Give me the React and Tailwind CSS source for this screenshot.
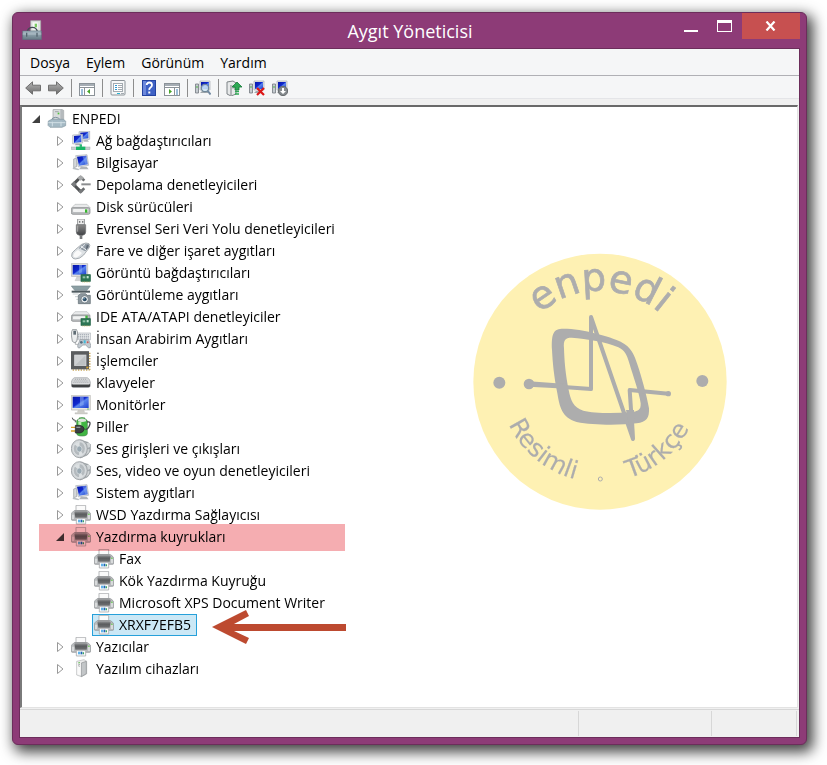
import React from "react";

function Gradients() {
  return (
    <svg width="0" height="0" className="absolute" aria-hidden="true">
      <defs>
        <linearGradient id="screen" x1="0" y1="0" x2="1" y2="1">
          <stop offset="0" stopColor="#0716a8" />
          <stop offset="0.45" stopColor="#1029cf" />
          <stop offset="0.55" stopColor="#5a86ee" />
          <stop offset="1" stopColor="#1c3fd0" />
        </linearGradient>
        <linearGradient id="metal" x1="0" y1="0" x2="0" y2="1">
          <stop offset="0" stopColor="#f2f4f5" />
          <stop offset="1" stopColor="#a5abb0" />
        </linearGradient>
        <linearGradient id="dark" x1="0" y1="0" x2="0" y2="1">
          <stop offset="0" stopColor="#8a8a8a" />
          <stop offset="1" stopColor="#3f4144" />
        </linearGradient>
        <linearGradient id="slot" x1="0" y1="0" x2="0" y2="1">
          <stop offset="0" stopColor="#8c8e90" />
          <stop offset="0.4" stopColor="#5a5c5e" />
          <stop offset="1" stopColor="#6e7072" />
        </linearGradient>
        <linearGradient id="arrow" x1="0" y1="0" x2="0" y2="1">
          <stop offset="0" stopColor="#b5b5b5" />
          <stop offset="1" stopColor="#6c6c6c" />
        </linearGradient>
        <linearGradient id="box" x1="0" y1="0" x2="0" y2="1">
          <stop offset="0" stopColor="#a9bcc6" />
          <stop offset="1" stopColor="#647883" />
        </linearGradient>
      </defs>
    </svg>
  );
}

function Board() {
  return (
    <g>
      <rect x="30" y="35" width="28" height="20" fill="#2c7554" stroke="#1f5f43" strokeWidth="2" />
      <rect x="35" y="40" width="8" height="6" fill="#8fc0a6" />
      <rect x="47" y="39" width="6" height="7" fill="#bfe4cf" />
      <path d="M34 57h22" stroke="#c9b257" strokeWidth="2" strokeDasharray="3 2" />
    </g>
  );
}

function Drive({ lamp }) {
  return (
    <g>
      <path d="M12 22h36l10 11H2z" fill="#e9eaeb" stroke="#b9bcbe" strokeWidth="2" />
      <rect x="1" y="32" width="56" height="20" rx="5" fill="#b9bcbe" stroke="#7d8082" strokeWidth="2" />
      <rect x="6" y="36" width="46" height="9" rx="2" fill="#f1f2f2" />
      {lamp && <rect x="42" y="37" width="7" height="10" fill="#35b52c" />}
    </g>
  );
}

function Printer() {
  return (
    <g>
      <path d="M15 1h29v20H15z" fill="#fafafa" stroke="#a9acae" strokeWidth="2.5" />
      <path d="M9 17h41l7 6q2 2 2 5v15q0 3-3 3H4q-3 0-3-3V28q0-3 2-5z" fill="#b9bcbe" stroke="#8a8d8f" strokeWidth="2" />
      <path d="M12 15h35v8H12z" fill="#9a9c9e" />
      <path d="M10 20h40l-3 18H13z" fill="url(#slot)" />
      <path d="M3 29h6v13H3zM51 29h6v13h-6z" fill="#d9dbdc" />
      <rect x="51" y="26" width="5" height="4" fill="#7cd06b" />
      <path d="M16 40h28v17H16z" fill="#fafafa" stroke="#a9acae" strokeWidth="2.5" />
      <path d="M21 44h7v8h-7z" fill="#5fb2ea" />
      <path d="M29 44h5v8h-5z" fill="#1d62b8" />
      <path d="M35 46h4v6h-4z" fill="#3aa164" />
    </g>
  );
}

function Speaker() {
  return (
    <g>
      <path d="M28 3l22 7 8 6v20l-9 12-22 9z" fill="#a4aaae" stroke="#8c9296" strokeWidth="2" />
      <path d="M46 12h11v12l-9 4zM47 30l9 1-3 10-8 6z" fill="#d0d4d6" />
      <ellipse cx="25" cy="29" rx="24" ry="27" fill="#d0d4d7" stroke="#969b9f" strokeWidth="2.5" />
      <ellipse cx="25" cy="29" rx="18" ry="21" fill="#b4babe" stroke="#e6e9ea" strokeWidth="2" />
      <path d="M25 29L11 16Q17 8 26 8zM25 29l11 16q-5 6-12 6z" fill="#dde1e3" />
      <ellipse cx="25" cy="30" rx="8" ry="9" fill="#9aa9b2" stroke="#dfe4e7" strokeWidth="2" />
    </g>
  );
}

function Computer() {
  return (
    <g>
      <path d="M8 18l9-3v26l-9 3z" fill="#d5d8db" stroke="#959a9e" strokeWidth="2" />
      <path d="M14 8l34-3 5 32-31 5z" fill="#dfe2e5" stroke="#aab0b5" strokeWidth="2" />
      <path d="M18 11l28-3 4 26-26 4z" fill="url(#screen)" />
      <path d="M34 10l12-2 4 26-6 1z" fill="#90b4f2" opacity=".45" />
      <path d="M30 41h17l6 8H24z" fill="#b0b5b9" />
      <path d="M6 43l19 5-3 4-17-4z" fill="#b8bec3" />
    </g>
  );
}

const drawings = {
  root: (
    <g>
      <path d="M18 2l22-2 10 4v33H18z" fill="#d9dcdd" stroke="#999d9f" strokeWidth="2" />
      <path d="M40 0l10 4v32H40z" fill="#b5babd" />
      <path d="M24 8h11" stroke="#8b8f91" strokeWidth="2" />
      <rect x="32" y="11" width="5" height="5" fill="#4fc03d" />
      <path d="M13 34q2-9 13-9t14 9" fill="none" stroke="#7d929d" strokeWidth="3" />
      <path d="M4 36l10-5h36l6 6v13l-11 5H9l-6-6z" fill="#a4b9c4" stroke="#869aa5" strokeWidth="2" />
      <path d="M4 41h51M16 38v14M42 38v14" stroke="#d1dfe5" strokeWidth="3" />
    </g>
  ),
  network: (
    <g>
      <path d="M24 2l32-2v25l-32 4z" fill="#dce0e6" stroke="#aab0b8" strokeWidth="2" />
      <path d="M28 5l24-2v19l-24 3z" fill="url(#screen)" />
      <path d="M38 27h12l4 5H38z" fill="#b3b8bd" />
      <path d="M5 12l30-2v26l-30 3z" fill="#e3e6ea" stroke="#aab0b8" strokeWidth="2" />
      <path d="M9 15l22-2v20l-22 3z" fill="url(#screen)" />
      <path d="M15 38h12l3 5H11z" fill="#a6acb2" />
      <rect x="26" y="40" width="7" height="8" fill="#2fb976" />
      <rect x="1" y="48" width="56" height="8" fill="#c9cfd1" stroke="#a3abad" strokeWidth="1.5" />
      <rect x="15" y="47" width="28" height="10" fill="#18b765" />
    </g>
  ),
  computer: <Computer />,
  storage: (
    <g>
      <path d="M29 6L7 28l22 22" fill="none" stroke="#505254" strokeWidth="9" />
      <path d="M29 6l11 11M29 50l11-10" stroke="#6b6d6f" strokeWidth="8" />
      <path d="M29 0l10 9-10 8-10-8z" fill="#a8aaab" />
      <path d="M29 42l8 7-8 7-8-7z" fill="#77797b" />
      <path d="M9 19l8 9-8 9-9-9z" fill="#7b7d7f" />
      <path d="M31 28h28" stroke="#8c8e90" strokeWidth="6" />
    </g>
  ),
  drive: <Drive lamp />,
  usb: (
    <g>
      <rect x="20" y="0" width="20" height="18" fill="#ececec" stroke="#85888a" strokeWidth="2.5" />
      <path d="M24 6h4v5h-4zM33 6h4v5h-4z" fill="#77797b" />
      <path d="M16 17h28v22q0 8-9 10H25q-9-2-9-10z" fill="url(#dark)" stroke="#6d6e70" strokeWidth="2" />
      <path d="M26 48h8v12h-8z" fill="#77797b" />
      <path d="M20 20v18" stroke="#aaa" strokeWidth="3" />
    </g>
  ),
  mouse: (
    <g>
      <path d="M2 46Q-1 36 14 25L32 10q14-7 22-2 5 5 0 13L38 42Q27 54 13 54 5 54 2 46z" fill="#dde1e4" stroke="#9aa0a5" strokeWidth="2.5" />
      <path d="M7 44q2-10 14-17l12 9Q20 51 12 49q-5-1-5-5z" fill="#fafafa" />
      <path d="M33 11q12-5 21 0 1 5-2 9l-9 11-20-9z" fill="#919ba5" />
      <path d="M30 16l16 11M42 10L28 23" stroke="#edf0f3" strokeWidth="3" />
      <path d="M46 14l7-4-1 9-7 9z" fill="#5d6873" />
    </g>
  ),
  display: (
    <g>
      <path d="M1 2h49v38H1z" fill="#e4e4e2" stroke="#adaeac" strokeWidth="2" />
      <path d="M5 6h41v29H5z" fill="url(#screen)" />
      <path d="M24 6h9v22l-9 4z" fill="#8eb0f4" opacity=".5" />
      <path d="M18 41h14l4 12H12z" fill="#d3d5d6" stroke="#adaeac" />
      <Board />
    </g>
  ),
  imaging: (
    <g>
      <path d="M1 3h57L48 16H11z" fill="#8c9fa4" stroke="#7a8c92" strokeWidth="2" />
      <path d="M2 17h55v6H2z" fill="#4f5a5f" />
      <path d="M5 27h18M12 35h10M16 43h6" stroke="#c7cdd0" strokeWidth="3" />
      <path d="M22 31l7-5h15l5 5h9v25H22z" fill="#8d979e" stroke="#5d6970" strokeWidth="2" />
      <circle cx="41" cy="43" r="11" fill="#eef1f3" stroke="#5d6970" strokeWidth="2" />
      <circle cx="41" cy="43" r="6" fill="#2c4b63" />
      <circle cx="39" cy="41" r="2" fill="#9ec9e5" />
    </g>
  ),
  ide: (
    <g>
      <path d="M12 14h36l10 11H2z" fill="#e9eaeb" stroke="#b9bcbe" strokeWidth="2" />
      <rect x="1" y="24" width="56" height="19" rx="5" fill="#b9bcbe" stroke="#7d8082" strokeWidth="2" />
      <rect x="6" y="28" width="40" height="9" rx="2" fill="#f1f2f2" />
      <path d="M43 26h7v9h-7z" fill="#41b53b" />
      <Board />
    </g>
  ),
  human: (
    <g>
      <path d="M16 12h43v20H16z" fill="#e9ebed" stroke="#aeb3b9" strokeWidth="2" />
      <path d="M20 17h36M20 22h36M20 27h36" stroke="#a2a9b2" strokeWidth="3" strokeDasharray="4 2" />
      <path d="M5 1h11q5 6 4 20l-3 17q-8 6-13-1L1 18Q1 6 5 1z" fill="#eceeef" stroke="#8b9094" strokeWidth="2.5" />
      <path d="M7 5h8v12H7z" fill="#5f6c74" />
      <path d="M13 39v7h10" fill="none" stroke="#8b9094" strokeWidth="2" />
      <path d="M27 32h26l7 18q-1 10-8 6l-8-8h-9l-8 8q-7 4-7-6z" fill="#c3cad0" stroke="#8c949b" strokeWidth="2" />
      <circle cx="31" cy="40" r="4" fill="#596e7f" />
      <path d="M38 34h6v9h-6z" fill="#42b9da" />
      <circle cx="50" cy="40" r="3" fill="#ca5b59" />
    </g>
  ),
  cpu: (
    <g>
      <path d="M56 5v52M5 57h51" stroke="#c9a85c" strokeWidth="5" strokeDasharray="4 4" />
      <rect x="0" y="0" width="54" height="55" fill="#5a5c5e" />
      <path d="M0 0h54v2H0z" fill="#7d7f81" />
      <rect x="11" y="12" width="34" height="32" fill="#bec1c3" stroke="#dddfe0" strokeWidth="2" />
      <path d="M11 44V12h34z" fill="#d9dbdc" opacity=".6" />
      <path d="M46 47h6v5h-6z" fill="#e0a528" />
    </g>
  ),
  keyboard: (
    <g>
      <path d="M10 14h39q7 3 9 13v11q0 5-6 5H7q-6 0-6-5V27q2-10 9-13z" fill="#d3d5d7" stroke="#a2a5a7" strokeWidth="2" />
      <path d="M12 19h36M10 24h40M7 29h46" stroke="#96999c" strokeWidth="2" strokeDasharray="3 3" />
      <path d="M2 34h55v4q0 5-5 5H7q-5 0-5-5z" fill="#3f4143" />
      <path d="M5 33h49" stroke="#f2f3f4" strokeWidth="2" />
    </g>
  ),
  monitor: (
    <g>
      <path d="M1 1h57v44H1z" fill="#e9e8e3" stroke="#b4b3af" strokeWidth="2" />
      <path d="M5 5h48v34H5z" fill="url(#screen)" />
      <path d="M27 5h11v25l-11 4z" fill="#8eb0f4" opacity=".55" />
      <path d="M21 46h18l2 7h8v4H12v-4h7z" fill="#cfcec9" stroke="#b4b3af" />
      <path d="M48 42h6" stroke="#3db53b" strokeWidth="2" />
    </g>
  ),
  battery: (
    <g>
      <path d="M24 3q9-3 18 0v4q7 1 7 5v38q-1 7-16 7t-16-7V12q0-4 7-5z" fill="#41b644" stroke="#4c8852" strokeWidth="2" />
      <path d="M21 8q12-7 24 0v5q-12 4-24 0z" fill="#dfe5df" />
      <path d="M22 15h9v14h-9z" fill="#baf3af" />
      <path d="M48 15q12-3 8 9T43 38" fill="none" stroke="#45484c" strokeWidth="4" />
      <path d="M4 2l2 6 7 2v6" fill="none" stroke="#484c4e" strokeWidth="3" />
      <path d="M0 31h14M0 42h14" stroke="#d7a32c" strokeWidth="4" />
      <path d="M13 25h14q11 2 13 11-2 10-13 12H13z" fill="#3b3f42" stroke="#202325" strokeWidth="2" />
      <path d="M16 31h12" stroke="#90979b" strokeWidth="4" />
    </g>
  ),
  speaker: <Speaker />,
  printer: <Printer />,
  software: (
    <g>
      <path d="M17 7l22-5 8 5v38l-16 8-14-5z" fill="#ececec" stroke="#b5b8ba" strokeWidth="2" />
      <path d="M31 12l15-5v37l-15 9z" fill="#c3c6c8" stroke="#8b8e90" strokeWidth="2" />
      <path d="M19 10l10 3v36l-10-3z" fill="#fafafa" />
      <path d="M21 15l6 2M21 20l6 2" stroke="#85898c" strokeWidth="2" />
      <path d="M22 10h5v3h-5z" fill="#58b948" />
    </g>
  ),
};

function Icon({ name, className = "size-5" }) {
  return (
    <svg viewBox="0 0 60 60" className={className + " shrink-0"} aria-hidden="true">
      {drawings[name]}
    </svg>
  );
}

function Expander({ open, label }) {
  return (
    <button type="button" aria-label={label} aria-expanded={open} className="flex h-5 w-3 shrink-0 items-center justify-center">
      {open ? (
        <svg viewBox="0 0 10 10" className="size-2.5" aria-hidden="true">
          <path d="M9 1v8H1z" fill="#404040" />
        </svg>
      ) : (
        <svg viewBox="0 0 8 12" className="h-3 w-2" aria-hidden="true">
          <path d="M1.500 1.500v9L7 6z" fill="#fff" stroke="#999" strokeWidth="1" />
        </svg>
      )}
    </button>
  );
}

const categories = [
  ["Ağ bağdaştırıcıları", "network"],
  ["Bilgisayar", "computer"],
  ["Depolama denetleyicileri", "storage"],
  ["Disk sürücüleri", "drive"],
  ["Evrensel Seri Veri Yolu denetleyicileri", "usb"],
  ["Fare ve diğer işaret aygıtları", "mouse"],
  ["Görüntü bağdaştırıcıları", "display"],
  ["Görüntüleme aygıtları", "imaging"],
  ["IDE ATA/ATAPI denetleyiciler", "ide"],
  ["İnsan Arabirim Aygıtları", "human"],
  ["İşlemciler", "cpu"],
  ["Klavyeler", "keyboard"],
  ["Monitörler", "monitor"],
  ["Piller", "battery"],
  ["Ses girişleri ve çıkışları", "speaker"],
  ["Ses, video ve oyun denetleyicileri", "speaker"],
  ["Sistem aygıtları", "computer"],
  ["WSD Yazdırma Sağlayıcısı", "printer"],
  ["Yazdırma kuyrukları", "printer", ["Fax", "Kök Yazdırma Kuyruğu", "Microsoft XPS Document Writer", "XRXF7EFB5"]],
  ["Yazıcılar", "printer"],
  ["Yazılım cihazları", "software"],
];

function RedArrow() {
  return (
    <svg viewBox="0 0 134 36" className="absolute top-1/2 left-full ml-4 h-9 w-[134px] -translate-y-4" aria-hidden="true">
      <path d="M0 18L34 1l3 6-15 8h112v7H22l15 7-3 6z" fill="#bd4a30" />
    </svg>
  );
}

function Category({ label, icon, items }) {
  return (
    <li role="treeitem" aria-expanded={Boolean(items)} aria-selected="false">
      <div className="relative flex h-[22px] items-center pl-8">
        <Expander open={Boolean(items)} label={label} />
        <Icon name={icon} className="ml-[5px] size-5" />
        <span className="ml-[5px]">{label}</span>
        {items && <div className="absolute -top-0.5 left-[17px] h-[27px] w-[306px] bg-[#f5adb1] mix-blend-multiply" />}
      </div>
      {items && (
        <ul role="group" className="pl-[70px]">
          {items.map((item) => {
            const selected = item === "XRXF7EFB5";
            return (
              <li key={item} role="treeitem" aria-selected={selected} className="flex">
                <div
                  className={
                    selected
                      ? "relative flex h-[22px] items-center border border-[#26a0da] bg-[#cbe8f6] pr-[5px] pl-px"
                      : "flex h-[22px] items-center pl-0.5"
                  }
                >
                  <Icon name="printer" />
                  <span className="ml-[5px]">{item}</span>
                  {selected && <RedArrow />}
                </div>
              </li>
            );
          })}
        </ul>
      )}
    </li>
  );
}

function Watermark() {
  return (
    <svg viewBox="0 0 840 840" className="pointer-events-none absolute top-[133px] right-[57px] size-[280px]" role="img" aria-label="enpedi Resimli Türkçe">
      <defs>
        <path id="upper" d="M147 425a273 273 0 0 1 546 0" />
        <path id="lower" d="M118 425a302 302 0 0 0 604 0" />
      </defs>
      <ellipse cx="420" cy="425" rx="380" ry="384" fill="#fef1b3" />
      <g fill="#adadad" stroke="#adadad" fontFamily="'DejaVu Sans', sans-serif">
        <text fontSize="116" strokeWidth="2" textAnchor="middle">
          <textPath href="#upper" startOffset="50%">enpedi</textPath>
        </text>
        <text fontSize="74" strokeWidth="0.500" textAnchor="middle">
          <textPath href="#lower" startOffset="28%">Resimli</textPath>
        </text>
        <text fontSize="74" strokeWidth="0.500" textAnchor="middle">
          <textPath href="#lower" startOffset="72%">Türkçe</textPath>
        </text>
      </g>
      <circle cx="421" cy="717" r="6" fill="none" stroke="#adadad" strokeWidth="3" />
      <g fill="#adadad">
        <circle cx="118" cy="428" r="18" />
        <circle cx="727" cy="423" r="18" />
        <circle cx="207" cy="432" r="16" />
        <circle cx="625" cy="461" r="8" />
        <path
          fillRule="evenodd"
          d="M276 330C274 280 280 266 310 266C370 266 450 290 482 305C515 322 523 345 532 373C545 412 560 466 567 505C568 535 560 546 530 550C480 556 400 556 350 546C305 533 299 500 292 460C282 410 278 370 276 330ZM312 325C310 300 315 293 335 293C380 297 440 305 475 322C494 332 500 342 508 370C520 410 538 460 542 490C543 510 535 515 510 517C460 520 400 520 370 512C340 503 332 480 326 450C316 400 313 360 312 325Z"
        />
        <path d="M207 424L320 432V446L207 440z" />
      </g>
      <path d="M300 440L393 447V231L519 597L509 450L625 461" fill="none" stroke="#adadad" strokeWidth="12" strokeLinejoin="round" />
      <path d="M498 510h24l1 87h-7z" fill="#adadad" />
    </svg>
  );
}

function PanelGlyph({ left }) {
  return (
    <g>
      <rect x="0.500" y="3.500" width="15" height="12" fill="#fff" stroke="#8b9298" />
      <path d="M1 4h14v2H1z" fill="#a5adb4" />
      <path d="M1 7.500h14" stroke="#8b9298" />
      {left ? (
        <g>
          <path d="M5.500 8v7" stroke="#8b9298" />
          <path d="M2 10h2M2 12h2M2 14h2" stroke="#387fb5" />
          <path d="M11 9v5l-3-2.500z" fill="#47a52b" />
        </g>
      ) : (
        <g>
          <path d="M10.500 8v7" stroke="#8b9298" />
          <path d="M12 10h2M12 12h2M12 14h2" stroke="#387fb5" />
          <path d="M5 9v5l3-2.500z" fill="#47a52b" />
        </g>
      )}
    </g>
  );
}

function MiniPC() {
  return (
    <g>
      <path d="M.5 4h3v9h-3z" fill="#c5cbd0" stroke="#737a80" strokeWidth=".8" />
      <path d="M1.500 6h1v2h-1z" fill="#53b747" />
      <path d="M5 1h10v9H5z" fill="#dfe2e5" stroke="#b4babf" strokeWidth=".8" />
      <path d="M6 2h8v7H6z" fill="url(#screen)" />
      <path d="M7 11h6v2H5z" fill="#a2a8ad" />
    </g>
  );
}

const tools = [
  ["Geri", <path key="g" d="M.7 8L7.500 1.800v3.400h8v5.600h-8v3.400z" fill="url(#arrow)" stroke="#6f6f6f" />],
  ["İleri", <path key="g" d="M15.300 8L8.500 1.800v3.400h-8v5.600h8v3.400z" fill="url(#arrow)" stroke="#6f6f6f" />],
  null,
  ["Konsol ağacını göster", <PanelGlyph key="g" left />],
  null,
  [
    "Özellikler",
    <g key="g">
      <rect x="1" y="0.500" width="14" height="14.500" rx="1" fill="#f6f7f8" stroke="#8b9298" />
      <rect x="3.500" y="3.500" width="9" height="8" fill="#fff" stroke="#a4abb1" />
      <path d="M5 5.500h2M5 7.500h2M5 9.500h2" stroke="#2e97d2" />
      <path d="M8 5.500h4M8 7.500h4M8 9.500h4" stroke="#a4abb1" />
      <path d="M7 13.500h3" stroke="#28b4d3" />
      <path d="M11 13.500h3" stroke="#a4abb1" />
    </g>,
  ],
  null,
  [
    "Yardım konuları",
    <g key="g">
      <rect x="1.500" y="0.500" width="13" height="15" fill="#3e61c5" stroke="#2443a0" />
      <path d="M2 1h3v14H2z" fill="#6c88dc" />
      <path d="M5.700 5Q5.700 2.500 8.300 2.500T11 5Q11 6.500 9.500 7.500T8.300 10" fill="none" stroke="#fff" strokeWidth="1.800" />
      <path d="M7.300 11.500h2v2h-2z" fill="#fff" />
    </g>,
  ],
  ["Eylem bölmesini göster", <PanelGlyph key="g" />],
  null,
  [
    "Donanım değişikliklerini tara",
    <g key="g">
      <MiniPC />
      <circle cx="10" cy="8" r="3.700" fill="#d2e8f6" fillOpacity=".8" stroke="#708899" strokeWidth="1.200" />
      <path d="M12.500 10.500l3 4" stroke="#7188a1" strokeWidth="2" />
    </g>,
  ],
  null,
  [
    "Sürücüyü güncelleştir",
    <g key="g">
      <path d="M1 2l6-1 3 2v11l-5 2-4-2z" fill="#e7e9ea" stroke="#7d8386" />
      <path d="M5 5v10M6.500 6l2-.5M6.500 8l2-.5" stroke="#7d8386" />
      <path d="M11 2l5 5h-3v3H9V7H6z" fill="#2da954" stroke="#177a39" strokeWidth=".8" />
      <path d="M9 11.500h4M9 14h4" stroke="#2da954" strokeWidth="1.500" />
    </g>,
  ],
  [
    "Kaldır",
    <g key="g">
      <MiniPC />
      <path d="M8 8l7 7M15 8l-7 7" stroke="#dc1717" strokeWidth="2.200" />
    </g>,
  ],
  [
    "Devre dışı bırak",
    <g key="g">
      <MiniPC />
      <circle cx="11" cy="11" r="4.700" fill="#858a8e" stroke="#63686b" />
      <path d="M10 8h2v3h2l-3 3-3-3h2z" fill="#fff" />
    </g>,
  ],
];

export default function App() {
  return (
    <div className="flex min-h-screen bg-white pt-3 pr-5 pb-5 pl-3 font-['Open_Sans','Noto_Sans',sans-serif] text-sm text-black">
      <Gradients />
      <main className="flex flex-1 flex-col rounded-md border border-[#6c2d5b] bg-[#8d3b77] px-[7px] pb-[7px] shadow-[4px_5px_14px_2px_rgba(0,0,0,0.75)]">
        <header className="-mr-[1px] grid h-9 grid-cols-[1fr_auto_1fr] items-start">
          <svg viewBox="0 0 60 60" className="mt-[7px] ml-0.5 size-5" aria-hidden="true">
            <path d="M26 2h30v33H26z" fill="#dfe3e0" stroke="#a4aaa6" strokeWidth="2" />
            <path d="M32 7h15v22H32z" fill="#f7f9f6" />
            <path d="M38 11h7v11h-7z" fill="#79ca61" />
            <path d="M16 34q3-12 15-12t15 12" fill="none" stroke="#414c54" strokeWidth="4" />
            <path d="M2 33h56v26H2z" fill="url(#box)" stroke="#5d7480" strokeWidth="2" />
            <path d="M2 42h56" stroke="#c4d2da" strokeWidth="2" />
            <path d="M14 38v12M45 38v12" stroke="#54656f" strokeWidth="4" />
          </svg>
          <h1 className="pt-1 text-lg leading-7 text-white">Aygıt Yöneticisi</h1>
          <div className="flex items-start justify-end">
            <button type="button" aria-label="Simge durumuna küçült" className="flex h-[26px] w-8 items-center justify-center">
              <svg viewBox="0 0 16 16" className="size-4" aria-hidden="true">
                <path d="M1 12h14v2H1z" fill="#fff" />
              </svg>
            </button>
            <button type="button" aria-label="Ekranı kapla" className="flex h-[26px] w-[35px] items-center justify-center">
              <svg viewBox="0 0 16 16" className="size-4" aria-hidden="true">
                <path fillRule="evenodd" d="M0 2h15v12H0zM1 5v8h13V5z" fill="#fff" />
              </svg>
            </button>
            <button type="button" aria-label="Kapat" className="flex h-[26px] w-[58px] items-center justify-center bg-[#c75050]">
              <svg viewBox="0 0 12 10" className="h-2.5 w-3" aria-hidden="true">
                <path d="M1.500 .5l8 9M9.500 .5l-8 9" stroke="#fff" strokeWidth="2.200" />
              </svg>
            </button>
          </div>
        </header>
        <div className="flex flex-1 flex-col bg-[#f0f0f0] outline outline-[#6c2d5b]">
          <nav className="flex h-[27px] items-center border-b border-[#b0b0b5] bg-[#f5f6f7] pt-0.5 pl-0.5">
            {["Dosya", "Eylem", "Görünüm", "Yardım"].map((item) => (
              <button key={item} type="button" className="px-2 leading-5">
                {item}
              </button>
            ))}
          </nav>
          <div role="toolbar" aria-label="Araçlar" className="flex h-[23px] items-center border-b border-[#e4e5e8] bg-[#f5f6f7] pt-0.5 pl-px">
            {tools.map((tool, i) =>
              tool ? (
                <button key={tool[0]} type="button" aria-label={tool[0]} className="flex h-5 w-[23px] items-center justify-center">
                  <svg viewBox="0 0 16 16" className="size-4" aria-hidden="true">
                    {tool[1]}
                  </svg>
                </button>
              ) : (
                <div key={i} className="flex w-2 justify-center">
                  <div className="h-[18px] w-px bg-[#8d8d8d]" />
                </div>
              )
            )}
          </div>
          <section className="relative isolate mt-1.5 mr-px flex-1 border-t-2 border-r border-b border-l-2 border-t-[#696969] border-r-[#e3e3e3] border-b-[#e3e3e3] border-l-[#7a7a7a] bg-white pt-px pb-4">
            <ul role="tree" aria-label="Aygıtlar">
              <li role="treeitem" aria-expanded="true" aria-selected="false">
                <div className="flex h-[22px] items-center pl-2">
                  <Expander open label="ENPEDI" />
                  <Icon name="root" className="ml-[5px] size-5" />
                  <span className="ml-[5px]">ENPEDI</span>
                </div>
                <ul role="group">
                  {categories.map(([label, icon, items]) => (
                    <Category key={label} label={label} icon={icon} items={items} />
                  ))}
                </ul>
              </li>
            </ul>
            <Watermark />
          </section>
          <footer className="mt-px flex h-7 border-t border-[#d7d7d7] py-px pr-0.5">
            <div className="flex-1 border-r border-[#d7d7d7]" />
            <div className="w-[133px] border-r border-[#d7d7d7]" />
            <div className="w-[85px] border-r border-[#d7d7d7]" />
          </footer>
        </div>
      </main>
    </div>
  );
}
